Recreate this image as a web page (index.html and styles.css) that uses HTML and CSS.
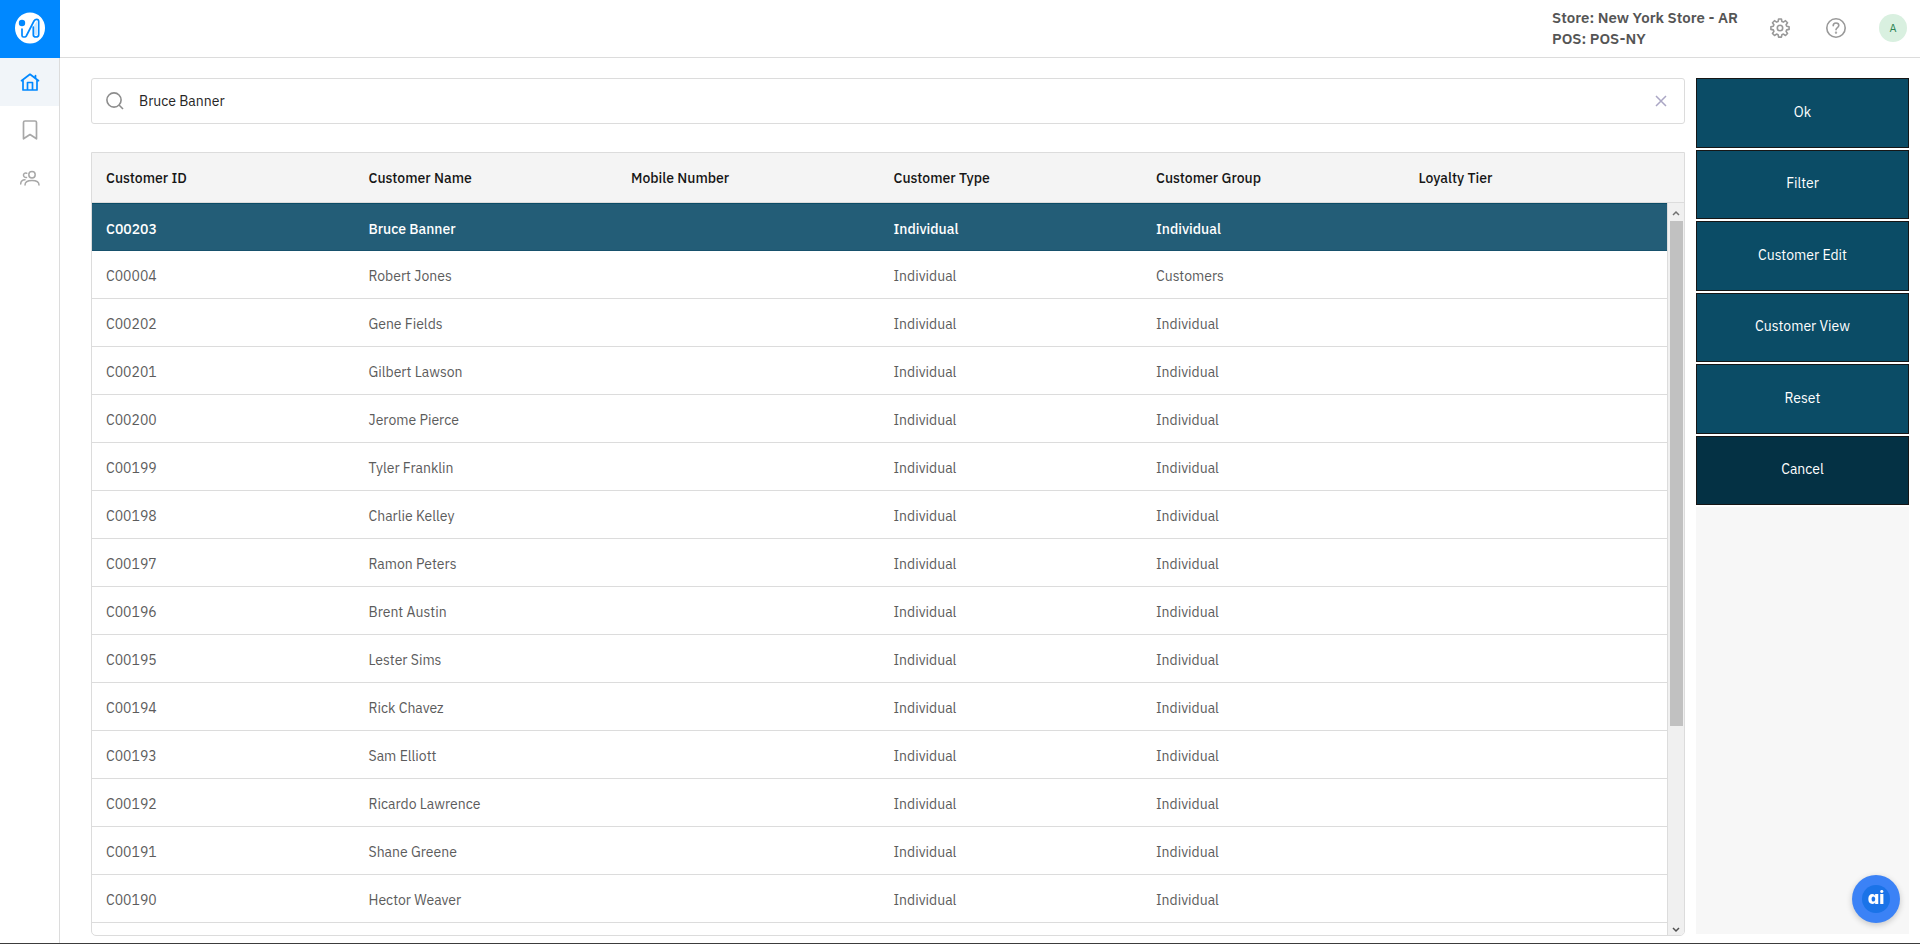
FILE: index.html
```html
<!DOCTYPE html>
<html lang="en">
<head>
    <meta charset="UTF-8">
    <meta name="viewport" content="width=device-width, initial-scale=1.0">
    <title>Customer Search</title>
    <link rel="stylesheet" href="styles.css">
</head>
<body>
    <nav class="sidebar">
        <a href="#" class="logo" aria-label="Start">
            <svg width="30" height="32" viewBox="0 0 30 32" fill="none">
                <ellipse cx="15" cy="16" rx="15" ry="15.6" fill="#fff"/>
                <circle cx="7" cy="11" r="3.200" fill="#0088ff"/>
                <path d="M18 22.500V15l4-6v14z" fill="#0088ff" fill-opacity=".2"/>
                <path d="M7 17v6.500q0 1.500 1.500 1.500h1.200q1 0 1.600-1L19 9q1-1.700 2.700-1.700 2 0 2 2.200v13.200q0 2.300-2.700 2.300t-2.700-2.300V15" stroke="#0088ff" stroke-width="1.700" stroke-linecap="round"/>
            </svg>
        </a>
        <a href="#" class="nav-item active" aria-label="Home">
            <svg width="20" height="20" viewBox="0 0 20 20" fill="none" stroke="currentColor" stroke-width="1.700" stroke-linejoin="round" stroke-linecap="round">
                <path d="M1.500 8.700 10 2.300l8.500 6.400M3 8v10h14V8M7.500 18v-7.500h5V18M15.500 6V3.500"/>
            </svg>
        </a>
        <a href="#" class="nav-item" aria-label="Bookmarks">
            <svg width="20" height="20" viewBox="0 0 20 20" fill="none" stroke="currentColor" stroke-width="1.700" stroke-linejoin="round">
                <path d="M3.500 18.800V2.500q0-1.500 1.500-1.500h10q1.500 0 1.500 1.500v16.300L10 14.500z"/>
            </svg>
        </a>
        <a href="#" class="nav-item" aria-label="Customers">
            <svg width="20" height="20" viewBox="0 0 20 20" fill="none" stroke="currentColor" stroke-width="1.500" stroke-linecap="round">
                <circle cx="12" cy="6.800" r="3.200"/>
                <path d="M5 17c0-3.500 2.500-4.500 7-4.500s7 1 7 4.500M6.700 5.200C4.500 4.600 3.400 6 3.500 7.300s1.300 2.500 3 2.200M5 11.800c-3 .2-4.300 1.500-4.300 4.200"/>
            </svg>
        </a>
    </nav>

    <div class="main">
        <header class="topbar">
            <div class="store">
                <div>Store: New York Store - AR</div>
                <div>POS: POS-NY</div>
            </div>
            <button class="icon-btn" aria-label="Settings">
                <svg width="20" height="20" viewBox="0 0 20 20" fill="none" stroke="currentColor" stroke-width="1.600" stroke-linejoin="round">
                    <circle cx="10" cy="10" r="2.700"/>
                    <path d="M8.600 1h2.800l.5 2.500 1.500.6 2.100-1.400 2 2-1.400 2.100.6 1.500 2.400.4v2.700l-2.400.5-.6 1.500 1.400 2.100-2 2-2.100-1.400-1.500.6-.5 2.400H8.600l-.5-2.400-1.500-.6-2.100 1.400-2-2 1.400-2.100-.6-1.500L.9 11.400V8.700l2.400-.4.6-1.500-1.400-2.100 2-2 2.100 1.400 1.500-.6z"/>
                </svg>
            </button>
            <button class="icon-btn" aria-label="Help">
                <svg width="20" height="20" viewBox="0 0 20 20" fill="none" stroke="currentColor" stroke-width="1.600" stroke-linecap="round">
                    <circle cx="10" cy="10" r="9.200"/>
                    <path d="M7.200 7.800C7.200 6 8.300 5 10 5s2.800 1 2.800 2.500c0 2-2.800 2.200-2.800 4.300"/>
                    <circle cx="10" cy="14.600" r=".4"/>
                </svg>
            </button>
            <button class="avatar">A</button>
        </header>

        <div class="content">
            <main class="customers">
                <div class="search">
                    <label for="search" aria-label="Search">
                        <svg width="18" height="18" viewBox="0 0 18 18" fill="none" stroke="currentColor" stroke-width="1.600">
                            <circle cx="8" cy="8" r="7.100"/>
                            <path d="M13 13l4 4"/>
                        </svg>
                    </label>
                    <input type="text" id="search" value="Bruce Banner">
                    <button class="clear" aria-label="Clear">
                        <svg width="12" height="12" viewBox="0 0 12 12" stroke="currentColor" stroke-width="1.500">
                            <path d="M1 1l10 10M11 1L1 11"/>
                        </svg>
                    </button>
                </div>

                <div class="table-box">
                    <div class="table-scroll">
                        <table>
                            <thead>
                                <tr><th>Customer ID</th><th>Customer Name</th><th>Mobile Number</th><th>Customer Type</th><th>Customer Group</th><th>Loyalty Tier</th></tr>
                            </thead>
                            <tbody>
                                <tr class="selected"><td>C00203</td><td>Bruce Banner</td><td></td><td>Individual</td><td>Individual</td><td></td></tr>
                                <tr><td>C00004</td><td>Robert Jones</td><td></td><td>Individual</td><td>Customers</td><td></td></tr>
                                <tr><td>C00202</td><td>Gene Fields</td><td></td><td>Individual</td><td>Individual</td><td></td></tr>
                                <tr><td>C00201</td><td>Gilbert Lawson</td><td></td><td>Individual</td><td>Individual</td><td></td></tr>
                                <tr><td>C00200</td><td>Jerome Pierce</td><td></td><td>Individual</td><td>Individual</td><td></td></tr>
                                <tr><td>C00199</td><td>Tyler Franklin</td><td></td><td>Individual</td><td>Individual</td><td></td></tr>
                                <tr><td>C00198</td><td>Charlie Kelley</td><td></td><td>Individual</td><td>Individual</td><td></td></tr>
                                <tr><td>C00197</td><td>Ramon Peters</td><td></td><td>Individual</td><td>Individual</td><td></td></tr>
                                <tr><td>C00196</td><td>Brent Austin</td><td></td><td>Individual</td><td>Individual</td><td></td></tr>
                                <tr><td>C00195</td><td>Lester Sims</td><td></td><td>Individual</td><td>Individual</td><td></td></tr>
                                <tr><td>C00194</td><td>Rick Chavez</td><td></td><td>Individual</td><td>Individual</td><td></td></tr>
                                <tr><td>C00193</td><td>Sam Elliott</td><td></td><td>Individual</td><td>Individual</td><td></td></tr>
                                <tr><td>C00192</td><td>Ricardo Lawrence</td><td></td><td>Individual</td><td>Individual</td><td></td></tr>
                                <tr><td>C00191</td><td>Shane Greene</td><td></td><td>Individual</td><td>Individual</td><td></td></tr>
                                <tr><td>C00190</td><td>Hector Weaver</td><td></td><td>Individual</td><td>Individual</td><td></td></tr>
                            </tbody>
                        </table>
                    </div>
                    <div class="scroll-side">
                        <div class="scroll-head"></div>
                        <div class="scrollbar">
                            <svg width="16" height="18" viewBox="0 0 16 18" fill="none" stroke="#707070" stroke-width="1.500"><path d="M5 12l3-3 3 3"/></svg>
                            <div class="track"><div class="thumb"></div></div>
                            <svg width="16" height="12" viewBox="0 0 16 12" fill="none" stroke="#505050" stroke-width="1.500"><path d="M5 5l3 3 3-3"/></svg>
                        </div>
                    </div>
                </div>
            </main>

            <aside class="panel">
                <div class="actions">
                    <button>Ok</button>
                    <button>Filter</button>
                    <button>Customer Edit</button>
                    <button>Customer View</button>
                    <button>Reset</button>
                    <button class="cancel">Cancel</button>
                </div>
            </aside>
        </div>
    </div>

    <button class="assistant"><span>ai</span></button>
</body>
</html>
```

FILE: styles.css
```css
* {
    box-sizing: border-box;
}

body {
    display: flex;
    height: 100vh;
    margin: 0;
    overflow: hidden;
    border-bottom: 1px solid #3c3c3c;
    background-color: #fff;
    color: #161616;
    font-family: "IBM Plex Sans", Inter, sans-serif;
    font-size: 14px;
}

button {
    padding: 0;
    border: none;
    background: none;
    font: inherit;
    cursor: pointer;
}

svg {
    display: block;
}

.sidebar {
    display: flex;
    flex-direction: column;
    flex: none;
    width: 60px;
    border-right: 1px solid #dcdcdc;
}

.logo,
.nav-item {
    display: flex;
    justify-content: center;
    align-items: center;
    height: 48px;
    color: #a8a8a8;
}

.logo {
    height: 58px;
    margin-right: -1px;
    padding-bottom: 3px;
    background-color: #0088ff;
}

.nav-item.active {
    background-color: #f1f5f9;
    color: #0088ff;
}

.main {
    display: flex;
    flex-direction: column;
    flex: 1;
    min-width: 0;
}

.topbar {
    display: flex;
    justify-content: flex-end;
    align-items: center;
    gap: 36px;
    height: 58px;
    padding: 0 13px 2px 0;
    border-bottom: 1px solid #dcdcdc;
}

.store {
    margin-right: -4px;
    color: #555;
    font-size: 15px;
    font-weight: 600;
    line-height: 21px;
}

.icon-btn {
    color: #999;
}

.avatar {
    width: 28px;
    height: 28px;
    margin-left: -3px;
    border-radius: 50%;
    background-color: #d9f0e0;
    color: #2e8555;
    font-size: 11px;
}

.content {
    display: flex;
    flex: 1;
    gap: 11px;
    min-height: 0;
    padding: 20px 11px 7px 31px;
}

.customers {
    display: flex;
    flex-direction: column;
    flex: 1;
    gap: 28px;
    min-width: 0;
}

.search {
    display: flex;
    align-items: center;
    flex: none;
    gap: 15px;
    height: 46px;
    padding: 0 17px 0 14px;
    border: 1px solid #dcdcdc;
    border-radius: 3px;
}

.search label {
    color: #8d8d8d;
}

.search input {
    flex: 1;
    padding: 0;
    border: none;
    outline: none;
    color: #262626;
    font: inherit;
}

.clear {
    color: #aaa6c4;
}

.table-box {
    display: flex;
    flex: 1;
    min-height: 0;
    overflow: hidden;
    border: 1px solid #dcdcdc;
    border-radius: 0 0 5px 5px;
}

.table-scroll {
    flex: 1;
    overflow: hidden;
}

table {
    width: 100%;
    table-layout: fixed;
    border-collapse: separate;
    border-spacing: 0;
}

th,
td {
    height: 48px;
    padding: 0 14px;
    border-bottom: 1px solid #dcdcdc;
    text-align: left;
}

th {
    height: 50px;
    background-color: #f4f4f4;
    font-weight: 500;
}

td {
    padding-top: 2px;
    color: #5c5c5c;
}

.selected td {
    padding-top: 4px;
    border-top: 1px solid #0b4c66;
    border-bottom-color: #17516c;
    background-color: #235d77;
    color: #fff;
    font-weight: 500;
}

.scroll-side {
    display: flex;
    flex-direction: column;
    flex: none;
    width: 17px;
}

.scroll-head {
    height: 50px;
    border-bottom: 1px solid #dcdcdc;
    background-color: #f4f4f4;
}

.scrollbar {
    display: flex;
    flex-direction: column;
    flex: 1;
    border-left: 1px solid #dcdcdc;
    background-color: #f0f0f0;
}

.track {
    flex: 1;
    padding: 0 1px 0 2px;
}

.thumb {
    height: 72%;
    background-color: #c1c1c1;
}

.panel {
    width: 213px;
    margin-bottom: 2px;
    background-color: #f7f7f7;
}

.actions {
    display: flex;
    flex-direction: column;
    gap: 2px;
    height: 429px;
    padding-bottom: 2px;
    background-color: #fff;
}

.actions button {
    flex: 1;
    padding-bottom: 2px;
    border: 1px solid #161616;
    background-color: #0b4c66;
    color: #fff;
}

.actions .cancel {
    background-color: #043144;
}

.assistant {
    position: fixed;
    right: 20px;
    bottom: 21px;
    width: 48px;
    height: 48px;
    border-radius: 50%;
    background-color: #3b82f6;
    box-shadow: 0 2px 6px rgba(0, 0, 0, 0.2);
}

.assistant span {
    display: block;
    width: 28px;
    height: 28px;
    margin: 0 auto;
    border-radius: 50%;
    background-color: #1a73e8;
    color: #fff;
    font-family: Inter, sans-serif;
    font-size: 18px;
    font-weight: 800;
    font-feature-settings: "cv11";
    line-height: 26px;
}
```
